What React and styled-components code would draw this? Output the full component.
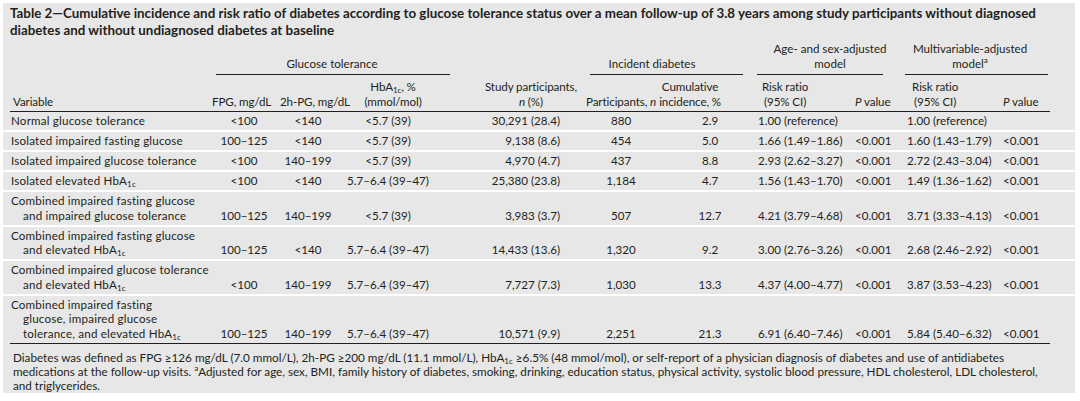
import styled, { createGlobalStyle } from "styled-components";

const Global = createGlobalStyle`
  body {
    margin: 0;
    background: #fff;
  }
`;

const Panel = styled.div`
  margin: 3px;
  width: 1072px;
  height: 390px;
  box-sizing: border-box;
  padding-top: 2px;
  background: #e7e7e7;
  color: #231f20;
  font-family: Lato, "Open Sans", sans-serif;
`;

const Title = styled.h1`
  margin: 0 0 0 7px;
  font-size: 13.35px;
  font-weight: 700;
  line-height: 17px;
  white-space: nowrap;
`;

const Table = styled.table`
  width: 100%;
  margin-top: 3px;
  border-collapse: collapse;
  table-layout: fixed;
  font-size: 11.6px;
  line-height: 14.5px;
`;

const Cell = styled.td`
  padding: 0;
  padding-left: ${(p) => p.$pl || 0}px;
  padding-right: ${(p) => p.$pr || 0}px;
  text-align: ${(p) => p.$align || "left"};
  vertical-align: bottom;
  white-space: nowrap;
`;

const GroupCell = styled(Cell)`
  padding-bottom: 0;
`;

const GroupLabel = styled.div`
  text-align: center;
  padding-left: ${(p) => p.$pl || 0}px;
  padding-right: ${(p) => p.$pr || 0}px;
`;

const Underline = styled.div`
  height: 1px;
  margin: 3px ${(p) => p.$mr}px 0 ${(p) => p.$ml}px;
  background: #231f20;
`;

const HeadCell = styled(Cell)`
  padding-top: 5px;
  padding-bottom: 2px;
  letter-spacing: -0.1px;
  border-bottom: ${(p) => (p.$edge ? "none" : "1px solid #231f20")};
`;

const HeadBlock = styled.span`
  display: inline-block;
  text-align: center;
`;

const DataCell = styled(Cell)`
  padding-top: 2px;
  padding-bottom: 1.5px;
  border-bottom: ${(p) =>
    p.$last ? (p.$edge ? "none" : "1px solid #231f20") : "2px solid #fff"};
`;

const Line = styled.div`
  padding-left: ${(p) => (p.$indent ? 13 : 1)}px;
  letter-spacing: 0.2px;
`;

const Sub = styled.sub`
  font-size: 8px;
  line-height: 0;
  vertical-align: -2px;
`;

const Sup = styled.sup`
  font-size: 8px;
  line-height: 0;
  vertical-align: 5px;
`;

const Footnote = styled.p`
  margin: 0;
  padding: 6px 0 0 10px;
  font-size: 11.7px;
  line-height: 14px;
  white-space: nowrap;
`;

const Hb = () => (
  <>
    HbA<Sub>1c</Sub>
  </>
);

const widths = [7, 202, 64, 64, 112, 134, 70, 96, 98, 50, 98, 52, 25];

const cols = [
  { key: "fpg", data: { $align: "center" }, head: { $align: "center", $pr: 6 } },
  { key: "hpg", data: { $align: "center" }, head: { $align: "center", $pl: 4 } },
  { key: "hba", data: { $align: "center", $pr: 16 }, head: { $align: "center", $pr: 6 } },
  { key: "n", data: { $align: "right", $pr: 26 }, head: { $align: "right", $pr: 9 } },
  { key: "p", data: { $align: "center" }, head: { $align: "right", $pr: 2 } },
  { key: "c", data: { $align: "center", $pl: 12 }, head: { $align: "right", $pr: 31 } },
  { key: "rr1", data: { $pl: 6 }, head: { $pl: 10 } },
  { key: "p1", data: { $pl: 5 }, head: { $pl: 5 } },
  { key: "rr2", data: { $pl: 7 }, head: { $pl: 12 } },
  { key: "p2", data: { $pl: 5 }, head: { $pl: 5 } },
];

const heads = {
  fpg: "FPG, mg/dL",
  hpg: "2h-PG, mg/dL",
  hba: (
    <>
      <Hb />, %<br />
      (mmol/mol)
    </>
  ),
  n: (
    <>
      Study participants,
      <br />
      <i>n</i> (%)
    </>
  ),
  p: (
    <>
      Participants, <i>n</i>
    </>
  ),
  c: (
    <>
      Cumulative
      <br />
      incidence, %
    </>
  ),
  rr1: (
    <>
      Risk ratio
      <br />
      (95% CI)
    </>
  ),
  p1: (
    <>
      <i>P</i> value
    </>
  ),
  rr2: (
    <>
      Risk ratio
      <br />
      (95% CI)
    </>
  ),
  p2: (
    <>
      <i>P</i> value
    </>
  ),
};

const rows = [
  {
    v: ["Normal glucose tolerance"],
    fpg: "<100", hpg: "<140", hba: "<5.7 (39)", n: "30,291 (28.4)", p: "880", c: "2.9",
    rr1: "1.00 (reference)", p1: "", rr2: "1.00 (reference)", p2: "",
  },
  {
    v: ["Isolated impaired fasting glucose"],
    fpg: "100–125", hpg: "<140", hba: "<5.7 (39)", n: "9,138 (8.6)", p: "454", c: "5.0",
    rr1: "1.66 (1.49–1.86)", p1: "<0.001", rr2: "1.60 (1.43–1.79)", p2: "<0.001",
  },
  {
    v: ["Isolated impaired glucose tolerance"],
    fpg: "<100", hpg: "140–199", hba: "<5.7 (39)", n: "4,970 (4.7)", p: "437", c: "8.8",
    rr1: "2.93 (2.62–3.27)", p1: "<0.001", rr2: "2.72 (2.43–3.04)", p2: "<0.001",
  },
  {
    v: [<>Isolated elevated <Hb /></>],
    fpg: "<100", hpg: "<140", hba: "5.7–6.4 (39–47)", n: "25,380 (23.8)", p: "1,184", c: "4.7",
    rr1: "1.56 (1.43–1.70)", p1: "<0.001", rr2: "1.49 (1.36–1.62)", p2: "<0.001",
  },
  {
    v: ["Combined impaired fasting glucose", "and impaired glucose tolerance"],
    fpg: "100–125", hpg: "140–199", hba: "<5.7 (39)", n: "3,983 (3.7)", p: "507", c: "12.7",
    rr1: "4.21 (3.79–4.68)", p1: "<0.001", rr2: "3.71 (3.33–4.13)", p2: "<0.001",
  },
  {
    v: ["Combined impaired fasting glucose", <>and elevated <Hb /></>],
    fpg: "100–125", hpg: "<140", hba: "5.7–6.4 (39–47)", n: "14,433 (13.6)", p: "1,320", c: "9.2",
    rr1: "3.00 (2.76–3.26)", p1: "<0.001", rr2: "2.68 (2.46–2.92)", p2: "<0.001",
  },
  {
    v: ["Combined impaired glucose tolerance", <>and elevated <Hb /></>],
    fpg: "<100", hpg: "140–199", hba: "5.7–6.4 (39–47)", n: "7,727 (7.3)", p: "1,030", c: "13.3",
    rr1: "4.37 (4.00–4.77)", p1: "<0.001", rr2: "3.87 (3.53–4.23)", p2: "<0.001",
  },
  {
    v: [
      "Combined impaired fasting",
      "glucose, impaired glucose",
      <>tolerance, and elevated <Hb /></>,
    ],
    fpg: "100–125", hpg: "140–199", hba: "5.7–6.4 (39–47)", n: "10,571 (9.9)", p: "2,251", c: "21.3",
    rr1: "6.91 (6.40–7.46)", p1: "<0.001", rr2: "5.84 (5.40–6.32)", p2: "<0.001",
  },
];

const groups = [
  { label: "Glucose tolerance", span: 3, ml: 4, mr: 2 },
  { span: 1, empty: true },
  { label: "Incident diabetes", span: 2, ml: 4, mr: 9, pr: 34 },
  { label: <>Age- and sex-adjusted<br />model</>, span: 2, ml: 5, mr: 17, pl: 8 },
  { label: <>Multivariable-adjusted<br />model<Sup>a</Sup></>, span: 2, ml: 5, mr: 2, pr: 10 },
];

export default function App() {
  return (
    <>
      <Global />
      <Panel>
        <Title>
          Table 2—Cumulative incidence and risk ratio of diabetes according to glucose tolerance
          status over a mean follow-up of 3.8 years among study participants without diagnosed
          <br />
          diabetes and without undiagnosed diabetes at baseline
        </Title>
        <Table>
          <colgroup>
            {widths.map((w, i) => (
              <col key={i} style={{ width: w }} />
            ))}
          </colgroup>
          <thead>
            <tr>
              <GroupCell />
              <GroupCell />
              {groups.map((g, i) =>
                g.empty ? (
                  <GroupCell key={i} colSpan={g.span} />
                ) : (
                  <GroupCell key={i} colSpan={g.span}>
                    <GroupLabel $pl={g.pl} $pr={g.pr}>
                      {g.label}
                    </GroupLabel>
                    <Underline $ml={g.ml} $mr={g.mr} />
                  </GroupCell>
                )
              )}
              <GroupCell />
            </tr>
            <tr>
              <HeadCell $edge />
              <HeadCell $pl={3}>Variable</HeadCell>
              {cols.map((c) => (
                <HeadCell key={c.key} {...c.head}>
                  <HeadBlock>{heads[c.key]}</HeadBlock>
                </HeadCell>
              ))}
              <HeadCell $edge />
            </tr>
          </thead>
          <tbody>
            {rows.map((r, i) => {
              const last = i === rows.length - 1;
              return (
                <tr key={i}>
                  <DataCell $edge $last={last} />
                  <DataCell $last={last}>
                    {r.v.map((line, j) => (
                      <Line key={j} $indent={j > 0}>
                        {line}
                      </Line>
                    ))}
                  </DataCell>
                  {cols.map((c) => (
                    <DataCell key={c.key} $last={last} {...c.data}>
                      {r[c.key]}
                    </DataCell>
                  ))}
                  <DataCell $edge $last={last} />
                </tr>
              );
            })}
          </tbody>
        </Table>
        <Footnote>
          Diabetes was defined as FPG ≥126 mg/dL (7.0 mmol/L), 2h-PG ≥200 mg/dL (11.1 mmol/L),{" "}
          <Hb /> ≥6.5% (48 mmol/mol), or self-report of a physician diagnosis of diabetes and use of
          antidiabetes
          <br />
          medications at the follow-up visits. <Sup>a</Sup>Adjusted for age, sex, BMI, family history
          of diabetes, smoking, drinking, education status, physical activity, systolic blood
          pressure, HDL cholesterol, LDL cholesterol,
          <br />
          and triglycerides.
        </Footnote>
      </Panel>
    </>
  );
}
